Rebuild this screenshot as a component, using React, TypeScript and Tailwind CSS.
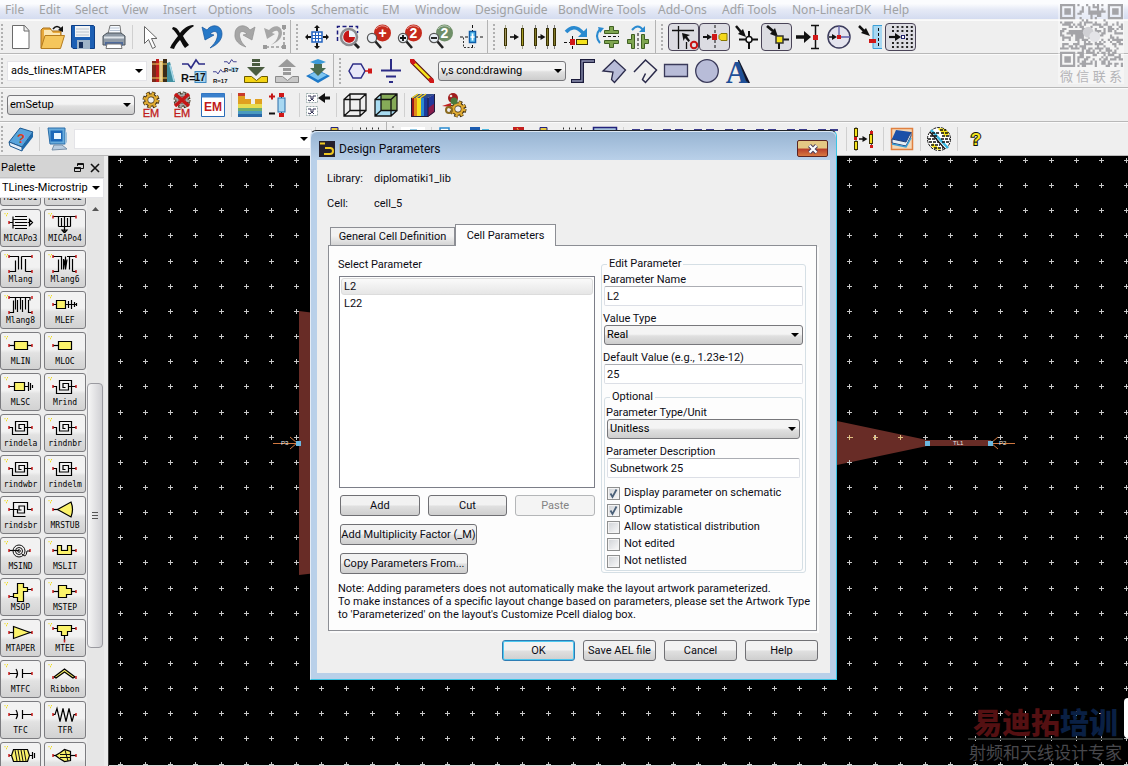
import React from 'react';
import clsx from 'clsx';

// ---------------------------------------------------------------- toolbar icons (24 x 24)

const arrowHead = 'M0 0l-5-3v6z';

const Gear: React.FC<{ fill: string }> = ({ fill }) => (
    <g>
        <circle cx="12" cy="7" r="6.5" fill="none" stroke="#3b2a10" strokeWidth="4" strokeDasharray="3.2 1.9" />
        <circle cx="12" cy="7" r="4.8" fill="none" stroke="#3b2a10" strokeWidth="4" />
        <circle cx="12" cy="7" r="6.5" fill="none" stroke={fill} strokeWidth="2.6" strokeDasharray="2.4 2.7" />
        <circle cx="12" cy="7" r="4.6" fill="none" stroke={fill} strokeWidth="2.4" />
    </g>
);

const EmText: React.FC<{ y: number; size?: number }> = ({ y, size = 11 }) => (
    <text x="12" y={y} fontSize={size} textAnchor="middle" fill="#c01a1a" stroke="#c01a1a" strokeWidth=".3" fontFamily="Liberation Sans, sans-serif">EM</text>
);

const Resistor: React.FC<{ x: number; y: number; s?: number }> = ({ x, y, s = 1 }) => (
    <path transform={`translate(${x} ${y}) scale(${s})`} d="M0 5h6l3 4 5-8 3 4h6" fill="none" stroke="#2c2c86" strokeWidth="1.6" />
);

const Lens: React.FC<{ bg: string; label: string; mark: string }> = ({ bg, label, mark }) => (
    <g>
        <circle cx="15.500" cy="8" r="8.500" fill={bg} />
        <path d="M9 4a8 8 0 0 1 12-1" stroke="#fff" strokeOpacity=".5" fill="none" />
        <text x="15.500" y="13" fontSize="14" fontWeight="bold" textAnchor="middle" fill="#fff" fontFamily="Liberation Sans, sans-serif">{label}</text>
        <path d="M8 16l6 7" stroke="#222" strokeWidth="2.6" />
        <circle cx="5" cy="13" r="4.6" fill="#e8eef4" stroke="#555" strokeWidth="1.2" />
        <path d={mark} stroke="#111" strokeWidth="1.8" fill="none" />
    </g>
);

const bar = (x: number, y: number, w: number, h: number, fill = '#f4e21c') => (
    <rect x={x} y={y} width={w} height={h} fill={fill} stroke="#3a3200" strokeWidth="1" />
);

const ICONS: Record<string, React.ReactNode> = {
    new: <path d="M3.500 .5h12l4.500 5v18H3.500zM15 .5v5.500h5" fill="#fff" stroke="#6a6a6a" />,
    open: (
        <g>
            <path d="M1 23V5l2-2h7l2 3h9v6" fill="#e8a93c" stroke="#a8701c" />
            <path d="M4 5h7l2 3h7v5H4z" fill="#fbe6b4" />
            <path d="M1 23.500L5 10.500h19.500l-4 13z" fill="#f5c65c" stroke="#b57c1e" />
            <path d="M13 4q4-5 8 0" fill="none" stroke="#111" strokeWidth="1.6" />
            <path d="M23 1v6l-5-2z" fill="#111" />
        </g>
    ),
    save: (
        <g>
            <path d="M.5 .5h22l1 1v22H2l-1.500-1.500z" fill="#1c5fb4" stroke="#0e3f86" />
            <rect x="4" y="1" width="15" height="11" fill="#f2f4f6" />
            <path d="M5 4h13M5 7h13M5 10h13" stroke="#bcc4cc" />
            <rect x="6" y="15" width="13" height="9" fill="#9fb4c8" />
            <rect x="8" y="17" width="4" height="6" fill="#17305c" />
        </g>
    ),
    print: (
        <g>
            <path d="M6 9L8 .5h10l1 8.500" fill="#f8fbff" stroke="#777" />
            <path d="M8 3h9M8 5.500h10" stroke="#b8c4d4" />
            <path d="M1 11l4-3h14l4 3v9H1z" fill="#8f9aa6" stroke="#4c545c" />
            <path d="M2 12.500h20" stroke="#dfe5ea" strokeWidth="2" />
            <path d="M3 17h18v3.500H3z" fill="#4f6a9a" />
            <path d="M5 19h14l1 4.500H4z" fill="#fff" stroke="#777" />
        </g>
    ),
    pointer: <path d="M5.500 1.500v17l4-4 4 9 3-1.500-4-8.500h5.500z" fill="#fff" stroke="#666" />,
    delete: <path d="M3 2c3 0 5 2 7 6 3-4 8-8 13-8l1 1c-5 3-8 6-11 10 2 4 4 6 6 9l-4 3c-2-2-3-5-5-8-3 3-5 6-6 9L0 23c2-5 5-8 8-12C6 8 4 5 2 4z" fill="#0c0c0c" />,
    undo: <path d="M1 2l3 13 9-5-4-1c5-5 9-2 7 4-1 4-4 7-7 10 7-3 12-8 12-14C21 0 11-2 6 5z" fill="#2779c8" stroke="#12539c" strokeWidth=".7" />,
    redo: <path d="M23 2l-3 13-9-5 4-1c-5-5-9-2-7 4 1 4 3 6 6 9C7 20 2 15 3 9 3 0 13-2 18 5z" fill="#a6a6a6" stroke="#8f8f8f" strokeWidth=".7" />,
    undoTo: (
        <g>
            <path d="M1 3l3 11 8-5-3-1c4-4 8-2 6 3-1 4-3 6-7 9 7-3 11-7 11-12C19 0 11-1 6 5z" fill="#a6a6a6" />
            <path d="M21 2v20H2" stroke="#9a9a9a" strokeWidth="1.6" fill="none" strokeDasharray="3 2" />
            <path d="M19 0h4v4h-4zM19 20h4v4h-4zM0 20h4v4H0z" fill="#9a9a9a" />
        </g>
    ),
    viewAll: (
        <g>
            <path d="M7 7h10v10H7z" fill="#fff" stroke="#2061c0" strokeWidth="1.500" />
            <path d="M10.500 7v10M13.500 7v10M7 10.500h10M7 13.500h10" stroke="#2061c0" />
            <path d="M12 0l-3 3h2v3h2V3h2zM12 24l-3-3h2v-3h2v3h2zM0 12l3-3v2h3v2H3v2zM24 12l-3-3v2h-3v2h3v2z" fill="#111" />
        </g>
    ),
    zoomArea: (
        <g>
            <path d="M1.500 16V1.500h20V8" fill="none" stroke="#1a1a7c" strokeWidth="1.500" strokeDasharray="4 2.500" />
            <path d="M18 18l5 5" stroke="#222" strokeWidth="3" />
            <circle cx="13" cy="12" r="8" fill="#eef3f8" stroke="#8c8c90" strokeWidth="2.500" />
            <path d="M13 5.500V12h6a6 6 0 0 1-11 3A6.500 6.500 0 0 1 13 5.500z" fill="#c41616" />
        </g>
    ),
    zoomPlus: <Lens bg="#c62a1c" label="+" mark="" />,
    zoomIn: <Lens bg="#c62a1c" label="2" mark="M2 13h6M5 10v6" />,
    zoomOut: <Lens bg="#6f8f68" label="2" mark="M2 13h6" />,
    center: (
        <g>
            <path d="M0 12h24M12.500 0v24" stroke="#111" strokeDasharray="3 2" />
            <path d="M3.500 12.500v10H15" fill="none" stroke="#333" strokeDasharray="2 1.500" />
            <rect x="9.500" y="6.500" width="6" height="11" fill="#5cc0f0" stroke="#0f5da8" strokeWidth="1.500" />
            <path d="M12.500 8.500v7M10.500 12h4" stroke="#fff" strokeWidth="1.500" />
        </g>
    ),
    move: (
        <g>
            {bar(2.5, 3.5, 2, 17, '#f0d79a')}
            {bar(19.5, 3.5, 2, 17)}
            <path d="M3.500 0v24M20.500 0v24" stroke="#55552a" strokeOpacity=".5" />
            <path d="M8 12h6" stroke="#111" strokeWidth="1.600" />
            <path transform="translate(17 12)" d={arrowHead} fill="#111" />
        </g>
    ),
    copy: (
        <g>
            {bar(1.500, 3.500, 2, 17)}
            {bar(13.500, 3.500, 2, 17)}
            {bar(20.500, 3.500, 2, 17)}
            <path d="M2.500 0v24M14.500 0v24M21.500 0v24" stroke="#333" strokeOpacity=".6" />
            <path d="M5 12h4" stroke="#111" strokeWidth="1.600" />
            <path transform="translate(12.500 12)" d={arrowHead} fill="#111" />
        </g>
    ),
    rotate: (
        <g>
            <path d="M2 7q8-9 17 1" fill="none" stroke="#2a8ad0" strokeWidth="3.500" />
            <path d="M23 3v9h-9z" fill="#2a8ad0" />
            <path d="M8.500 11v13M0 17.500h7" stroke="#111" strokeDasharray="3 2" />
            <rect x="6" y="14" width="5" height="6" fill="#d01818" />
            {bar(12.500, 14.500, 11, 5)}
        </g>
    ),
    mirrorY: (
        <g>
            <path d="M5 4q-6 7 0 14" fill="none" stroke="#2a8ad0" strokeWidth="2" />
            <path d="M3 2l6 1-4 5z" fill="#2a8ad0" />
            <path d="M8 11.500h16" stroke="#111" strokeDasharray="3 2" />
            <path d="M9.500 5.500h5v-4h4v4h5v3h-14zM9.500 15.500h14v3h-5v4h-4v-4h-5z" fill="#7fa650" stroke="#3f5f22" />
        </g>
    ),
    mirrorX: (
        <g>
            <path d="M6 5q6-7 11 0" fill="none" stroke="#2a8ad0" strokeWidth="2" />
            <path d="M19 1v6h-6z" fill="#2a8ad0" />
            <path d="M12 8v16" stroke="#111" strokeDasharray="3 2" />
            <path d="M5.500 9.500h3v14h-3v-5h-4v-4h4zM15.500 9.500h3v5h4v4h-4v5h-3z" fill="#7fa650" stroke="#3f5f22" />
        </g>
    ),
    snapOrtho: (
        <g>
            <path d="M6.500 1v23M0 5.500h22" stroke="#111" strokeWidth="1.300" />
            <path d="M10 8l8 2-3 1.500 3 4-1.500 1.500-3.500-4-1.500 3z" fill="#111" />
            <path d="M14.500 17v7" stroke="#111" strokeWidth="1.300" />
            <circle cx="22" cy="20" r="3.200" fill="none" stroke="#c81414" strokeWidth="2" />
        </g>
    ),
    snapPin: (
        <g>
            <path d="M12 0v24" stroke="#111" strokeDasharray="3 2" />
            <path d="M0 12h6" stroke="#111" strokeWidth="2" />
            <path transform="translate(9 12)" d={arrowHead} fill="#111" />
            <rect x="9" y="9" width="5" height="6" fill="#d01818" />
            <path d="M24 8.500h-6l-2 2v3l2 2h6z" fill="#f4d81c" stroke="#8a7a00" />
        </g>
    ),
    snapVertex: (
        <g>
            <path d="M15 6v18M5 14.500h19" stroke="#111" strokeWidth="2" />
            <path d="M2 1l5 6" stroke="#111" strokeWidth="2.500" />
            <path d="M12 12L4 9l5-5z" fill="#111" />
            <circle cx="15" cy="14.500" r="3" fill="#fff" stroke="#111" strokeWidth="1.500" />
        </g>
    ),
    snapMid: (
        <g>
            <path d="M14 15v9M12 14.500h12" stroke="#111" strokeWidth="2" />
            <path d="M2 1l6 5" stroke="#111" strokeWidth="2.800" />
            <path d="M13 12L5 9l5-6z" fill="#111" />
            <rect x="11" y="11" width="7" height="7" fill="#f4e21c" stroke="#333" strokeWidth="1.500" />
        </g>
    ),
    snapEdge: (
        <g>
            <path d="M0 12h9" stroke="#111" strokeWidth="3.500" />
            <path d="M15 12L8 6v12z" fill="#111" />
            <path d="M15 .5h8M15 23.500h8M19.500 0v24" stroke="#111" strokeWidth="1.500" />
            <rect x="17" y="10" width="5" height="5" fill="#d01818" />
        </g>
    ),
    snapCenter: (
        <g>
            <circle cx="12" cy="12" r="11" fill="#e4e4ee" stroke="#3c3c5c" strokeWidth="1.500" />
            <path d="M12 1v11h11" stroke="#5c5ca8" strokeWidth="1.300" fill="none" />
            <path d="M2 12h5" stroke="#111" strokeWidth="1.500" />
            <path transform="translate(10 12)" d={arrowHead} fill="#111" />
            <rect x="10" y="10" width="4" height="4" fill="#d01818" />
        </g>
    ),
    snapBox: (
        <g>
            <path d="M24 .5h-9v23h9" fill="#a9d8f2" stroke="#3aa0d8" />
            <path d="M20.500 3v18" stroke="#111" strokeDasharray="3 2" />
            <path d="M1 1l5 5" stroke="#111" strokeWidth="2.500" />
            <path d="M12 11L3 8l5-5z" fill="#111" />
            <rect x="11" y="14" width="7" height="4" fill="#d01818" />
        </g>
    ),
    snapGrid: (
        <g>
            <path d="M3 2h21M3 6h21M3 18h21M3 22h21M17 10h7M17 14h7" stroke="#222" strokeWidth="2" strokeDasharray="2 2.700" />
            <path d="M0 12h6" stroke="#111" strokeWidth="2.200" />
            <path d="M12 12L6 8v8z" fill="#111" />
            <rect x="12.500" y="10.500" width="3" height="3" fill="#fff" stroke="#22226c" />
        </g>
    ),
    library: (
        <g>
            <path d="M1 2h4v21H1z" fill="#7a2a1a" />
            <path d="M5 0h3v23H5z" fill="#c01c1c" />
            <path d="M8 2h4v21H8z" fill="#d8b060" />
            <path d="M12 0h4v23h-4z" fill="#3c2c18" />
            <path d="M16 4l3-1 5 20h-8z" fill="#3f8fa0" />
            <path d="M19 6l4 16" stroke="#a8d8e8" strokeWidth="1.500" />
            <path d="M1 5h15M1 19h15" stroke="#f0d060" />
            <path d="M10 3v19" stroke="#f4ecc8" />
        </g>
    ),
    edit17: (
        <g>
            <Resistor x={0} y={0} />
            <rect x="13" y="12.500" width="11" height="11" fill="#a8d4ee" stroke="#3a86c0" />
            <text x="-1" y="23" fontSize="11" fontWeight="bold" fill="#111" fontFamily="Liberation Sans, sans-serif">R=</text>
            <text x="12.500" y="22" fontSize="10" fontWeight="bold" fill="#111" fontFamily="Liberation Sans, sans-serif">17</text>
        </g>
    ),
    edit17b: (
        <g>
            <Resistor x={11} y={0} s={0.55} />
            <Resistor x={0} y={10} s={0.55} />
            <rect x="18" y="8" width="6" height="5" fill="#a8d4ee" />
            <text x="11" y="13" fontSize="6" fontWeight="bold" fill="#111" fontFamily="Liberation Sans, sans-serif">R=17</text>
            <text x="0" y="24" fontSize="6" fontWeight="bold" fill="#111" fontFamily="Liberation Sans, sans-serif">R=17</text>
        </g>
    ),
    pushDown: (
        <g>
            <path d="M.5 17.500h7l5 4 5-4h6v6H.5z" fill="#f4d414" stroke="#6a5a00" />
            <path d="M8 0h8v3H8zM8 4h8v3H8zM3 8h18l-9 9z" fill="#4a5c40" />
        </g>
    ),
    popUp: (
        <g>
            <path d="M.5 17.500h7l5 4 5-4h6v6H.5z" fill="#c8c8c8" stroke="#8a8a8a" />
            <path d="M12 0l9 8H3zM8 9h8v3H8zM8 13h8v3H8z" fill="#9a9a9a" />
        </g>
    ),
    stack: (
        <g>
            <path d="M0 17l12-6 12 6-12 7z" fill="#1c78c8" />
            <path d="M3 16l9-4 9 4-9 5z" fill="#7cc4f0" />
            <path d="M4 3l8-3 8 3-8 3z" fill="#3a9ad8" />
            <path d="M8 5h8v4h4l-8 8-8-8h4z" fill="#4a6c50" />
        </g>
    ),
    port: (
        <g>
            <path d="M1 12l4-7h8l4 7-4 7H5z" fill="#e8e8f8" stroke="#2c2c86" strokeWidth="1.500" />
            <path d="M17 12h4" stroke="#d01818" strokeWidth="1.500" />
            <rect x="20" y="9.500" width="4" height="5" fill="#d01818" />
        </g>
    ),
    ground: <path d="M12 0v11M2 11.500h20M7 17.500h10M10 23h4" stroke="#2c2c86" strokeWidth="2" />,
    wire: (
        <g>
            <path d="M2 2l20 20" stroke="#5a1010" strokeWidth="5" />
            <path d="M3 3l18 18" stroke="#f4e21c" strokeWidth="2.500" />
            <path d="M0 0h4l2 4-3 2-3-3zM24 24h-4l-2-4 3-2 3 3z" fill="#d01818" />
        </g>
    ),
    path: <g><path d="M0 22h11V2h13" fill="none" stroke="#1c1c3c" strokeWidth="4" /><path d="M1 22h10V2h12" fill="none" stroke="#9094b4" strokeWidth="1.300" /></g>,
    polygon: <path d="M12.500 1l11 10-11 12.500-3-3L11 13l-10-1z" fill="#b8bcd8" stroke="#2a2a4a" strokeWidth="1.300" />,
    polyline: <path d="M1 13L12.500 1l11 10-11 12.500-3-3 3-6" fill="none" stroke="#2a2a4a" strokeWidth="1.500" />,
    rect: <path d="M.5 5.500h23v12H.5z" fill="#b8bcd8" stroke="#3a3a5a" strokeWidth="1.300" />,
    circle: <circle cx="12" cy="12" r="11.300" fill="#b8bcd8" stroke="#3a3a5a" strokeWidth="1.300" />,
    text: (
        <g>
            <path d="M12 1h1l11 23h-9z" fill="#10102c" />
            <text x="11" y="23.500" fontSize="31" fontWeight="bold" textAnchor="middle" fill="#1f4f98" fontFamily="Liberation Serif, serif">A</text>
        </g>
    ),
    emSetup: <g><Gear fill="#e0ac34" /><EmText y={24} /></g>,
    emStop: <g><Gear fill="#a8a8a8" /><path d="M5 1l14 12M19 1L5 13" stroke="#c41616" strokeWidth="3.500" /><EmText y={24} /></g>,
    em: (
        <g>
            <path d="M.5 .5h23v23H.5z" fill="#fff" stroke="#2a6cb8" />
            <path d="M.5 .5h23v4H.5z" fill="#3a80cc" />
            <text x="12" y="18" fontSize="12" fontWeight="bold" textAnchor="middle" fill="#c01a1a" fontFamily="Liberation Sans, sans-serif">EM</text>
        </g>
    ),
    substrate: (
        <g>
            <path d="M0 0h7v3H0z" fill="#c83a2a" />
            <path d="M0 3h7v3h6v5h4V6h7v5H0z" fill="#e0a020" />
            <path d="M0 11h24v4H0z" fill="#e8dc50" />
            <path d="M0 15h24v3H0z" fill="#6fae70" />
            <path d="M0 18h24v3H0z" fill="#4a9ac0" />
            <path d="M0 21h24v3H0z" fill="#2a68a8" />
        </g>
    ),
    portEdit: (
        <g>
            <path d="M0 3.500h6M3 .5v6" stroke="#c41616" strokeWidth="2" />
            <path d="M0 20.500h6" stroke="#111" strokeWidth="2" />
            <path d="M12.500 1v22" stroke="#222" />
            <rect x="9" y="5" width="7" height="14" fill="#a8d8f2" stroke="#2a6ca8" />
            <path d="M10 0h5v4h-5zM10 20h5v4h-5z" fill="#d01818" />
        </g>
    ),
    cosim: (
        <g>
            <path d="M.5 .5h11v9H.5zM.5 13.500h11v9H.5z" fill="#fff" stroke="#9aa" strokeDasharray="2 1" />
            <path d="M2 3h3v3h2V3h3M2 7l2 1 2-2 2 2M2 16h3v3h2v-3h3M2 20l2 1 2-2 2 2" stroke="#335" fill="none" />
            <path d="M24 5h-6" stroke="#111" strokeWidth="3" />
            <path d="M12 5l7-5v10z" fill="#111" />
        </g>
    ),
    cube: <path d="M1 6.500h16v16.500H1zM7 1h16v16.500H7zM1 6.500L7 1M17 6.500L23 1M17 23l6-5.500M1 23l6-5.500" fill="none" stroke="#111" strokeWidth="1.300" />,
    cubeSolid: (
        <g>
            <path d="M7 1h16v16H7z" fill="#86ab58" />
            <path d="M1 6l6-5v17l-6 5z" fill="#a8dcf2" />
            <path d="M1 23l6-6h16l-6 6z" fill="#a8dcf2" />
            <path d="M1 6.500h16v16.500H1zM7 1h16v16.500H7zM1 6.500L7 1M17 6.500L23 1M17 23l6-5.500M1 23l6-5.500" fill="none" stroke="#111" strokeWidth="1.300" />
        </g>
    ),
    field: (
        <g>
            <path d="M0 5h4v19H0z" fill="#a01818" />
            <path d="M3 5h4v19H3z" fill="#e08a18" />
            <path d="M6 5h4v19H6z" fill="#f4e21c" />
            <path d="M10 5h3v19h-3z" fill="#2a8ad0" />
            <path d="M13 5h4v19h-4z" fill="#1c3c9c" />
            <path d="M17 5l7-4v18l-7 5z" fill="#8a1c4c" />
            <path d="M17 5l7-4v9l-7 5z" fill="#22389c" />
            <path d="M0 5l6-4h18l-7 4z" fill="#304c8c" />
            <path d="M1 5l6-4M5 5l6-4M9 5l6-4" stroke="#f0d020" strokeWidth="1.500" />
            <path d="M.5 5v18.500h16.500l6.500-5V1M17 5v18" fill="none" stroke="#1c1c3c" />
        </g>
    ),
    gearPerson: (
        <g>
            <g transform="translate(4 9)"><Gear fill="#e0ac34" /></g>
            <circle cx="11" cy="5" r="5" fill="#a01c1c" />
            <circle cx="12" cy="8" r="3.500" fill="#4c7a3c" />
            <circle cx="9" cy="3" r="1.300" fill="#e8e0d8" />
            <path d="M0 13l9-3v4z" fill="#c02020" />
            <circle cx="7" cy="17" r="3" fill="none" stroke="#8a6a20" strokeWidth="2" />
        </g>
    ),
    helpBook: (
        <g>
            <path d="M0 15L11 1l13 4-11 15z" fill="#58a4dc" stroke="#1c5890" />
            <path d="M0 15l13 5v4L1 19z" fill="#e4eef8" stroke="#1c5890" />
            <path d="M13 20L24 5v5L13 24z" fill="#1f68a8" />
            <text x="12" y="16" fontSize="13" fontWeight="bold" textAnchor="middle" fill="#d8401c" fontFamily="Liberation Sans, sans-serif">?</text>
        </g>
    ),
    monitor: (
        <g>
            <path d="M2 1h17v16H4z" fill="#68acdc" stroke="#2a6ca8" />
            <path d="M4.500 3.500h12v11h-12z" fill="#1c68b8" />
            <path d="M8 6h7v6H8z" fill="#eaf6ff" />
            <path d="M19 3l2 3v9l-2 3z" fill="#9cc0dc" />
            <path d="M8 18h8l5 4-15 1z" fill="#b8cce0" stroke="#7890a8" />
        </g>
    ),
    moveEdge: (
        <g>
            <path d="M3 0v24M18.500 3v17" stroke="#555" />
            {bar(1.500, 1.500, 3, 8)}
            {bar(1.500, 14.500, 3, 8)}
            {bar(16.500, 7.500, 3, 9)}
            <path d="M1 10h3v3H1zM17 4h3v3h-3zM17 18h3v3h-3z" fill="#d01818" />
            <path d="M6 12h5" stroke="#111" strokeWidth="1.500" />
            <path transform="translate(14.500 12)" d={arrowHead} fill="#111" />
        </g>
    ),
    designKit: (
        <g>
            <path d="M1.500 1.500h21v21h-21z" fill="#f4d8b8" stroke="#e08040" strokeWidth="1.500" />
            <path d="M6 3l15 2-5 10L2 12z" fill="#1c50a8" />
            <path d="M2 12l14 3 5-10v4l-5 10L2 16z" fill="#e8eef4" stroke="#1c3c78" />
            <path d="M2 17l14 3 5-9" fill="none" stroke="#3aa0d8" strokeWidth="1.500" />
        </g>
    ),
    globe: (
        <g>
            <circle cx="12" cy="12" r="11.500" fill="#fff" stroke="#111" strokeDasharray="3 1" />
            <path d="M12 1q8 0 10 6l-3 3-8-8zM6 16l8 7q-6 0-10-4z" fill="#f4e21c" />
            <path d="M4 3l17 18" stroke="#38b8e0" strokeWidth="2.500" />
            <path d="M5 6h7M3 9h7M1 12h9M2 15h10M4 18h9M7 21h9M13 3h6M14 6h8M15 9h8M14 12h9M15 15h7" stroke="#111" strokeWidth="1.400" strokeDasharray="3 1" />
            <path d="M3 5l15 17" stroke="#111" strokeWidth="1.300" />
        </g>
    ),
    help: (
        <text x="12" y="18" fontSize="17" fontWeight="bold" textAnchor="middle" fill="#f4e21c" stroke="#111" strokeWidth="2" paintOrder="stroke" fontFamily="Liberation Sans, sans-serif">?</text>
    ),
    pin: <g><path d="M9 .5h7v8H9z" fill="#e8c840" stroke="#22227c" /><path d="M11 3h3v3h-3z" fill="#d01818" /></g>,
    dots: <path d="M1 1.500h24" stroke="#333" strokeWidth="2" strokeDasharray="1 5" />,
    sheet: <g><path d="M0 0h24v24H0z" fill="#fff" /><path d="M9 2h7v4H9z" fill="#90c8e4" /></g>,
    window: <path d="M2 1h9v9H2z" fill="#fff" stroke="#2a8ad0" strokeWidth="1.500" />,
    windows: <g><path d="M1 0h10v8H1z" fill="#1c5cb0" /><path d="M13 2h7v7h-7z" fill="#50b8e0" /></g>,
    redBlock: <g><path d="M13 0h11v9H13z" fill="#c42020" /><path d="M17 1l2 3" stroke="#f0c040" /></g>,
    box: <path d="M.5 .5h23v20H.5z" fill="#a8c4dc" stroke="#22227c" strokeWidth="1.500" />,
    dashes: <path d="M2 3h8M14 3h8" stroke="#3c3c8c" strokeWidth="2" />,
};

const Icon: React.FC<{ name: string }> = ({ name }) => (
    <svg viewBox="0 0 24 24" className="size-6 overflow-visible" aria-hidden="true">{ICONS[name]}</svg>
);

// ---------------------------------------------------------------- toolbar parts

const ToolButton: React.FC<{ name: string; pressed?: boolean }> = ({ name, pressed }) => (
    <button
        type="button"
        aria-label={name}
        className={clsx(
            'flex h-7 w-[31px] shrink-0 items-center justify-center rounded-sm border',
            pressed ? 'border-[#4a4458] bg-[#dcdce2]' : 'border-transparent',
        )}
    >
        <Icon name={name} />
    </button>
);

const Separator = () => <div className="mr-0.5 ml-[3px] h-6 w-px shrink-0 bg-[#d0d0d0]" />;
const Handle: React.FC<{ first?: boolean; wide?: boolean }> = ({ first, wide }) => (
    <div
        className={clsx(
            'flex h-[33px] shrink-0 items-center',
            first ? 'w-[5px] pl-px' : 'border-l border-[#b4b4b4] pl-[5px]',
            !first && (wide ? 'ml-0.5 w-[13px]' : 'w-[11px]'),
        )}
    >
        <div className="h-[26px] border-l-2 border-dotted border-[#b0b0b0]" />
    </div>
);

const Tools: React.FC<{ items: string }> = ({ items }) => (
    <>
        {items.split(' ').map((name, i) => {
            if (name === '|') return <Separator key={i} />;
            if (name === '||') return <Handle key={i} />;
            return <ToolButton key={i} name={name.replace('*', '')} pressed={name.endsWith('*')} />;
        })}
    </>
);

const Toolbar: React.FC<{ children: React.ReactNode }> = ({ children }) => (
    <div className="flex h-[34px] shrink-0 items-center border-b border-[#b8b8b8] bg-[#efefef] shadow-[inset_0_1px_0_#fafafa]">
        {children}
    </div>
);

interface ComboProps {
    label: string;
    value: string;
    className?: string;
    flat?: boolean;
    id?: string;
}

const Combo: React.FC<ComboProps> = ({ label, value, className, flat, id }) => (
    <div className={clsx('relative h-5 shrink-0', className)}>
        <select
            id={id}
            aria-label={id ? undefined : label}
            defaultValue={value}
            className={clsx(
                'block h-full w-full appearance-none pr-3.5 text-[11px] leading-[16px] text-black outline-none',
                flat
                    ? 'border border-[#e4e4e8] bg-white pl-[3px]'
                    : 'rounded-[3px] border border-[#77777b] bg-linear-to-b from-[#f4f4f4] from-45% via-[#e0e0e0] via-55% to-[#cdcdcd] pl-0.5',
            )}
        >
            <option>{value}</option>
        </select>
        <svg viewBox="0 0 8 4" className="pointer-events-none absolute top-2 right-1 h-1 w-2" aria-hidden="true">
            <path d="M0 0h8L4 4z" />
        </svg>
    </div>
);

// ---------------------------------------------------------------- palette

const Lead: React.FC<{ d: string; ends: [number, number][] }> = ({ d, ends }) => (
    <g>
        <path d={d} fill="none" stroke="#000" strokeWidth="1.200" />
        {ends.map(([x, y]) => <path key={`${x}-${y}`} d={`M${x} ${y - 1.5}v3`} stroke="#c81c1c" strokeWidth="1.500" />)}
    </g>
);

const both: [number, number][] = [[7, 9.5], [30, 9.5]];
const left: [number, number][] = [[7, 9.5]];
const corners: [number, number][] = [[7, 2.5], [30, 2.5], [7, 17.5], [30, 17.5]];
const yellow = { fill: '#fbf36a', stroke: '#000', strokeWidth: 1.2 };

const SYMBOLS: Record<string, React.ReactNode> = {
    comb: <Lead d="M7 9.500h4M11 3.500v12M13 3.500h12M11 6.500h14M13 9.500h12M11 12.500h14M13 15.500h12M25.500 9.500h2M27.500 6.500v6l3-3z" ends={left} />,
    combDown: <Lead d="M7 3.500h23M12.500 3.500v10M15.500 5v8.500M18.500 3.500v15M21.500 5v8.500M24.500 3.500v10M12.500 13.500h12M16 17l2.500 3 2.500-3z" ends={[[7, 4], [30, 4]]} />,
    lange: <Lead d="M7 2.500h9.500v13M7 17.500h6.500v-11M19.500 2.500v13M19.500 2.500H30M23.500 17.500H30M23.500 5v12.500" ends={corners} />,
    lange6: <Lead d="M7 2.500h8.500v13M7 17.500h5.500v-12M17.500 5v10.500l1.500-10M19.500 2.500v13l1.500-10M23.500 2.500v13M21 2.500h9M26.500 17.500H30M26.500 5v12.500" ends={corners} />,
    lange8: <Lead d="M7 2.500h21v3M7 17.500h4.500v-12M13.500 2.500v12M15.500 5v12M18.500 2.500v12M20.500 5v12M23.500 2.500v12M26.500 5v12.500H30" ends={corners} />,
    mlef: <g><Lead d="M7 9.500h4M20 9.500h11M22.500 6v7M25.500 5v9M28.500 7v5M30.500 8v3" ends={left} /><path d="M10.500 5.500h9v8h-9z" {...yellow} /></g>,
    mlin: <g><Lead d="M7 9.500h23" ends={both} /><path d="M12.500 5.500h13v8h-13z" {...yellow} /></g>,
    mloc: <g><Lead d="M7 9.500h6" ends={left} /><path d="M12.500 5.500h13v8h-13z" {...yellow} /></g>,
    mlsc: <g><Lead d="M7 9.500h19M26.500 5v9M28.500 6v7M30.500 8v3" ends={left} /><path d="M12.500 5.500h10v8h-10z" {...yellow} /></g>,
    spiral: <Lead d="M7 9.500h3.500v7h15V3.500H13.500v9.500h9V6.500H17v4h2.500M22 9.500h8" ends={both} />,
    spiralIn: <Lead d="M7 9.500h8.500v3.500h7v-7h-5.500v4h2.500M30 9.500h-4.500v-7h-14v14h12" ends={both} />,
    stub: <g><Lead d="M7 9.500h5" ends={left} /><path d="M11.500 9.500L25 2q3 7.500 0 15z" {...yellow} /></g>,
    coil: <g><Lead d="M7 9.500h10" ends={[[7, 9.5], [28, 9.5]]} /><circle cx="17" cy="10" r="6" fill="none" stroke="#111" /><circle cx="17" cy="10" r="3.500" fill="none" stroke="#111" /><circle cx="17" cy="10" r="1.300" fill="none" stroke="#111" /><path d="M20 13q4 5 5-3h3" fill="none" stroke="#111" /></g>,
    slit: <g><Lead d="M7 9.500h23" ends={both} /><path d="M11.500 4.500h4v5h6v-5h4v9h-14z" {...yellow} /></g>,
    sop: <g><Lead d="M7 14.500h4M25 7.500h5" ends={[[7, 14.500], [30, 7.500]]} /><path d="M15.500 1.500h6v4h4v4h-4v10h-6v-4h-4v-4h4z" {...yellow} /></g>,
    step: <g><Lead d="M7 9.500h23" ends={both} /><path d="M12.500 3.500h8v3h5v6h-5v3h-8z" {...yellow} /></g>,
    taper: <g><Lead d="M7 9.500h23" ends={both} /><path d="M11.500 3.500L28 9.500l-16.500 6z" {...yellow} /></g>,
    tee: <g><Lead d="M7 5.500h23M18.500 12v6" ends={[[7, 5.500], [30, 5.500], [18.500, 18]]} /><path d="M11.500 2.500h14v6h-4v4h-6v-4h-4z" {...yellow} /></g>,
    cap: <Lead d="M7 9.500h8M14 5q3 4.500 0 9M20.500 5v9M20 9.500h10" ends={both} />,
    ribbon: <g><path d="M8 13L18.500 5 29 13l-2 1-8.500-6L10 14z" {...yellow} /><Lead d="" ends={[[7, 13.5], [30, 13.5]]} /></g>,
    resistor: <Lead d="M7 9.500h2l2-6 3 13 3-13 3 13 3-13 3 13 2-7h2" ends={both} />,
    wireCoil: <g><Lead d="M7 9.500h23M30.500 6v7M32.500 7v5" ends={left} /><path d="M11.500 3.500h14l2 6-2 6h-14l-2-6z" {...yellow} /><path d="M13 4l2 11M16 4l2 11M19 4l2 11M22 4l2 11" stroke="#111" /></g>,
    wireVia: <g><Lead d="M7 9.500h23" ends={both} /><path d="M9.500 9.500l5-3 4-3 6 2v9l-6 1-5-3z" {...yellow} /><path d="M14 8.500h11M14 11.500h11M19 4l3 11" stroke="#111" /></g>,
};

const PALETTE: [string, string][] = [
    ['comb', 'MICAPo1'], ['combDown', 'MICAPo2'],
    ['comb', 'MICAPo3'], ['combDown', 'MICAPo4'],
    ['lange', 'Mlang'], ['lange6', 'Mlang6'],
    ['lange8', 'Mlang8'], ['mlef', 'MLEF'],
    ['mlin', 'MLIN'], ['mloc', 'MLOC'],
    ['mlsc', 'MLSC'], ['spiral', 'Mrind'],
    ['spiral', 'rindela'], ['spiral', 'rindnbr'],
    ['spiral', 'rindwbr'], ['spiral', 'rindelm'],
    ['spiralIn', 'rindsbr'], ['stub', 'MRSTUB'],
    ['coil', 'MSIND'], ['slit', 'MSLIT'],
    ['sop', 'MSOP'], ['step', 'MSTEP'],
    ['taper', 'MTAPER'], ['tee', 'MTEE'],
    ['cap', 'MTFC'], ['ribbon', 'Ribbon'],
    ['cap', 'TFC'], ['resistor', 'TFR'],
    ['wireCoil', ''], ['wireVia', ''],
];

const Palette = () => (
    <aside className="flex w-[109px] shrink-0 flex-col border-r border-[#3c3c3c] bg-[#ececec]">
        <div className="mr-1 flex h-[22px] shrink-0 items-center justify-between border-b border-[#c4c4c4] bg-[#d4d4d4] pt-0.5 pr-1 pl-px">
            <h2 className="text-[11px] leading-[14px]">Palette</h2>
            <div className="flex gap-1.5">
                <button type="button" aria-label="Float palette">
                    <svg viewBox="0 0 10 10" className="size-2.5" fill="none" stroke="#111">
                        <path d="M3.500 3V.5h6v5H7M3 1.500h7M.5 4.500h6v4h-6zM0 5.500h7" />
                    </svg>
                </button>
                <button type="button" aria-label="Close palette">
                    <svg viewBox="0 0 10 10" className="size-2.5" stroke="#111" strokeWidth="1.600">
                        <path d="M1 1l8 8M9 1L1 9" />
                    </svg>
                </button>
            </div>
        </div>
        <Combo label="Palette" value="TLines-Microstrip" flat className="mr-1 -ml-0.5" />
        <div className="flex min-h-0 flex-1">
            <div className="h-full w-[87px] overflow-hidden">
                <div className="-mt-[30px] grid grid-cols-[41px_42px] gap-[3px]">
                    {PALETTE.map(([symbol, name], i) => (
                        <button
                            key={i}
                            type="button"
                            aria-label={name || symbol}
                            className="flex h-[38px] flex-col items-center rounded-[3px] border border-[#7c7c80] bg-linear-to-b from-[#f2f2f2] from-45% via-[#e2e2e2] via-55% to-[#d2d2d2] pt-[3px]"
                        >
                            <svg viewBox="0 0 38 20" className="h-5 w-[38px] shrink-0" aria-hidden="true">
                                <path d="M2.500 .5h1M5 .5h1M4 2.500h1" stroke="#eedc20" strokeWidth="1.500" />
                                {SYMBOLS[symbol]}
                            </svg>
                            <span className="font-['DejaVu_Sans_Mono',monospace] text-[8px] leading-[11px]">{name}</span>
                        </button>
                    ))}
                </div>
            </div>
            <div className="flex w-[17px] flex-col bg-[#e6e6e6]">
                <svg viewBox="0 0 17 17" className="mt-px size-[17px]" aria-hidden="true"><path d="M5 12h7L8.500 8z" fill="#555" /></svg>
                <div className="mt-[167px] flex h-[265px] w-4 items-center justify-center rounded-sm border border-[#9a9aa0] bg-linear-to-r from-[#f6f6f6] to-[#d0d0d4]">
                    <div className="h-[7px] w-1.5 border-y border-[#555] py-[2px]"><div className="h-px bg-[#555]" /></div>
                </div>
            </div>
        </div>
    </aside>
);

// ---------------------------------------------------------------- layout canvas

const GRID_STEP = 25.15;
const crosses = Array.from({ length: 41 * 25 }, (_, i) => {
    const x = Math.round(11 + (i % 41) * GRID_STEP);
    const y = Math.round(4 + Math.floor(i / 41) * GRID_STEP);
    return `M${x - 2} ${y + 0.5}h5M${x + 0.5} ${y - 2}v5`;
}).join('');

const LayoutCanvas = () => (
    <main className="relative min-w-0 flex-1 overflow-hidden border-b border-[#d8d8d8] bg-black">
        <svg className="absolute inset-0 size-full" aria-label="Layout">
            <path d="M190 155l400 50v168l-400 46zM728 265l90 19v6l-90 19zM818 284h64v6h-64z" fill="#682c26" />
            <path d={crosses} stroke="#c8c8c8" />
            <path d="M739 281.500h5M740.500 279v5M764 281.500h5M765.500 279v5M789 281.500h5M791.500 279v5" stroke="#e0c080" />
            <path d="M164 287.500h25M181 281l7 6-7 6M906 287.500h-25M889 281l-7 6 7 6" fill="none" stroke="#d07840" />
            <path d="M187 285h5v5h-5zM816 285h5v5h-5zM879 285h5v5h-5z" fill="#6cb8e0" />
            <g fill="#e8e8e8" fontSize="6" fontFamily="Liberation Sans, sans-serif">
                <text x="844" y="289">TL1</text>
                <text x="172" y="289">P3</text>
                <text x="890" y="289">P2</text>
            </g>
        </svg>
        <div className="absolute top-[542px] -right-px h-10 w-[5px] rounded-l-sm bg-white" />
        <div className="absolute right-[5px] bottom-1 w-[155px] font-['Noto_Sans_CJK_SC',sans-serif]">
            <div className="flex justify-center pb-0.5 text-[29px] leading-[30px] font-black">
                <span className="text-[#541012]">易迪拓</span>
                <span className="text-[#0a2044]">培训</span>
            </div>
            <div className="border-t-2 border-[#2c302e] pt-[3px] text-center text-[17px] leading-[18px] text-[#48484c]">射频和天线设计专家</div>
        </div>
    </main>
);

// ---------------------------------------------------------------- contact code

const QR_SIZE = 29;
const inFinder = (x: number, y: number) =>
    (x < 8 && y < 8) || (x >= QR_SIZE - 8 && y < 8) || (x < 8 && y >= QR_SIZE - 8);
const qrPath = Array.from({ length: QR_SIZE * QR_SIZE }, (_, i) => {
    const x = i % QR_SIZE;
    const y = Math.floor(i / QR_SIZE);
    if (inFinder(x, y)) return '';
    const noise = Math.sin(x * 12.9898 + y * 78.233) * 43758.5453;
    return noise - Math.floor(noise) < 0.52 ? `M${x} ${y}h1v1h-1z` : '';
}).join('');
const finder = (x: number, y: number) => `M${x} ${y}h7v7h-7zM${x + 1} ${y + 1}v5h5v-5zM${x + 2} ${y + 2}h3v3h-3z`;

const ContactCode = () => (
    <div className="absolute top-1 right-1 w-[66px] bg-white/40 px-0.5 text-[#b4b4b8]">
        <svg viewBox="0 0 29 29" className="size-[63px]" fill="#a4a4a8" fillRule="evenodd" aria-label="QR code">
            <path d={qrPath} />
            <path d={finder(0, 0) + finder(22, 0) + finder(0, 22)} />
            <circle cx="13" cy="13" r="2.500" fill="#d0d0d4" />
            <circle cx="16" cy="15" r="2.500" fill="#e4e4e8" />
        </svg>
        <div className="flex justify-between font-['Noto_Sans_CJK_SC',sans-serif] text-[13px] leading-[17px]">
            {['微', '信', '联', '系'].map(c => <span key={c}>{c}</span>)}
        </div>
    </div>
);

// ---------------------------------------------------------------- dialog

const PushButton: React.FC<{ children: React.ReactNode; className?: string; primary?: boolean; disabled?: boolean }> = ({ children, className, primary, disabled }) => (
    <button
        type="button"
        disabled={disabled}
        className={clsx(
            'h-[21px] rounded-[3px] border text-center text-[11px] leading-[19px] whitespace-nowrap',
            disabled
                ? 'border-[#b4b6b8] bg-[#f4f4f4] text-[#838383]'
                : 'bg-linear-to-b from-[#f2f2f2] from-45% via-[#dfdfdf] via-55% to-[#cfcfcf]',
            !disabled && (primary ? 'border-[#2e7db4] shadow-[inset_0_0_0_1px_#4cc8f0]' : 'border-[#707074]'),
            className,
        )}
    >
        {children}
    </button>
);

const TextField: React.FC<{ id: string; label: string; value: string }> = ({ id, label, value }) => (
    <div>
        <label htmlFor={id} className="-ml-px block leading-[13px]">{label}</label>
        <input
            id={id}
            type="text"
            defaultValue={value}
            className="block h-5 w-full rounded-[2px] border border-[#dcdfe6] border-t-[#abadb3] bg-white px-0.5 text-[11px] leading-[16px] outline-none"
        />
    </div>
);

const SelectField: React.FC<{ id: string; label: string; value: string }> = ({ id, label, value }) => (
    <div>
        <label htmlFor={id} className="-ml-px block leading-[13px]">{label}</label>
        <Combo id={id} label={label} value={value} />
    </div>
);

const Checkbox: React.FC<{ label: string; checked?: boolean }> = ({ label, checked }) => (
    <label className="flex h-[17px] items-center gap-[4px]">
        <span className="relative size-[13px]">
            <input
                type="checkbox"
                defaultChecked={checked}
                className="peer block size-[13px] appearance-none border border-[#8e8f8f] bg-linear-to-br from-[#cfd2d6] to-[#fafafa] shadow-[inset_0_0_0_1px_#f4f4f4]"
            />
            <svg viewBox="0 0 13 13" className="pointer-events-none absolute inset-0 hidden size-[13px] peer-checked:block" aria-hidden="true">
                <path d="M3.500 6.500l2 3.500 4-7.500" fill="none" stroke="#4a6078" strokeWidth="1.800" />
            </svg>
        </span>
        {label}
    </label>
);

const Group: React.FC<{ title: string; className?: string; children: React.ReactNode }> = ({ title, className, children }) => (
    <fieldset className={clsx('min-w-0 rounded-[3px] border border-[#d5dfe5]', className)}>
        <legend className="ml-[3px] px-[2px] leading-[12px]">{title}</legend>
        {children}
    </fieldset>
);

const DesignParametersDialog = () => (
    <div
        role="dialog"
        aria-label="Design Parameters"
        className="absolute top-[130px] left-[310px] w-[527px] rounded-t-md border border-t-[#202428] border-r-[#38c4e4] border-b-[#38c4e4] border-l-[#e4ecf6] bg-[#b9d0e9] px-[6px] pb-[6px] text-[11px] text-[#0c0c14]"
    >
        <div className="-mx-[6px] flex h-[29px] items-center gap-1 rounded-t-md bg-linear-to-b from-[#97b4d2] to-[#b9d0e9] pr-2 pl-2 shadow-[inset_0_1px_0_#dce8f4]">
            <svg viewBox="0 0 16 16" className="mt-1.5 size-4" aria-hidden="true">
                <path d="M0 0h16v16H0z" fill="#24202c" />
                <path d="M1 2.500h5M6 7h6M5 13h6q3 0 3-3t-3-3" fill="none" stroke="#f0c820" strokeWidth="2" />
            </svg>
            <h1 className="mt-1.5 text-xs">Design Parameters</h1>
            <button
                type="button"
                aria-label="Close"
                className="mt-1.5 ml-auto flex h-[17px] w-[31px] items-center justify-center rounded-[2px] border border-[#5a2424] bg-linear-to-b from-[#e4c884] from-45% via-[#b8402c] via-55% to-[#d87840]"
            >
                <svg viewBox="0 0 12 10" className="h-2.5 w-3" aria-hidden="true">
                    <path d="M2.500 1.500l7 7M9.500 1.500l-7 7" stroke="#4a4060" strokeWidth="4.200" />
                    <path d="M2.500 1.500l7 7M9.500 1.500l-7 7" stroke="#fff" strokeWidth="2.200" />
                </svg>
            </button>
        </div>

        <div className="bg-[#efefef] pt-3 pr-3 pb-3 pl-[11px]">
            <dl className="-ml-px grid grid-cols-[47px_1fr] gap-y-[11px] leading-[14px]">
                <dt>Library:</dt>
                <dd>diplomatiki1_lib</dd>
                <dt>Cell:</dt>
                <dd>cell_5</dd>
            </dl>

            <div role="tablist" className="mt-[13px] flex items-end pl-0.5 text-center">
                <button type="button" role="tab" aria-selected="false" className="h-[18px] w-[125px] border border-b-0 border-[#8c8e94] bg-linear-to-b from-[#f2f2f2] from-45% to-[#d4d4d4] leading-[16px]">
                    General Cell Definition
                </button>
                <button type="button" role="tab" aria-selected="true" className="relative -mb-px h-[22px] w-[101px] border border-b-0 border-[#8c8e94] bg-[#fdfdfd] leading-[20px]">
                    Cell Parameters
                </button>
            </div>

            <div role="tabpanel" className="mr-px border border-[#8c8e94] bg-[#fdfdfd] pt-3 pr-[10px] pb-[9px] pl-[9px] shadow-[2px_2px_0_#fafafa]">
                <div className="flex gap-[6px]">
                    <div className="min-w-0 flex-1">
                        <h2 className="leading-[13px]">Select Parameter</h2>
                        <ul role="listbox" aria-label="Select Parameter" className="mt-[5px] ml-px h-[212px] border border-[#7c7e88] bg-white p-px leading-[15px]">
                            <li role="option" aria-selected="true" className="rounded-[3px] border border-[#dcdcdc] bg-linear-to-b from-[#fafafa] to-[#e6e6e6] px-0.5">L2</li>
                            <li role="option" aria-selected="false" className="border border-transparent px-0.5">L22</li>
                        </ul>
                        <div className="mt-[7px] flex flex-col items-start gap-2 pl-0.5">
                            <div className="flex w-full gap-2">
                                <PushButton className="flex-1">Add</PushButton>
                                <PushButton className="flex-1">Cut</PushButton>
                                <PushButton className="flex-1" disabled>Paste</PushButton>
                            </div>
                            <PushButton className="w-[137px]">Add Multiplicity Factor (_M)</PushButton>
                            <PushButton className="w-32">Copy Parameters From...</PushButton>
                        </div>
                    </div>

                    <Group title="Edit Parameter" className="w-[205px] self-start px-0.5 pb-px">
                        <div className="flex flex-col gap-[6px] pt-[3px]">
                            <TextField id="parameter-name" label="Parameter Name" value="L2" />
                            <SelectField id="value-type" label="Value Type" value="Real" />
                            <TextField id="default-value" label="Default Value (e.g., 1.23e-12)" value="25" />
                        </div>
                        <Group title="Optional" className="mt-[7px] px-0.5">
                            <div className="flex flex-col gap-[6px] pt-[3px]">
                                <SelectField id="parameter-type" label="Parameter Type/Unit" value="Unitless" />
                                <TextField id="parameter-description" label="Parameter Description" value="Subnetwork 25" />
                            </div>
                            <div className="mt-[7px]">
                                <Checkbox label="Display parameter on schematic" checked />
                                <Checkbox label="Optimizable" checked />
                                <Checkbox label="Allow statistical distribution" />
                                <Checkbox label="Not edited" />
                                <Checkbox label="Not netlisted" />
                            </div>
                        </Group>
                    </Group>
                </div>
                <p className="mt-2 leading-[13px] whitespace-nowrap">
                    Note: Adding parameters does not automatically make the layout artwork parameterized.<br />
                    To make instances of a specific layout change based on parameters, please set the Artwork Type<br />
                    to 'Parameterized' on the layout's Customize Pcell dialog box.
                </p>
            </div>

            <div className="mt-[9px] flex justify-end gap-2">
                <PushButton className="w-[73px]" primary>OK</PushButton>
                <PushButton className="w-[73px]">Save AEL file</PushButton>
                <PushButton className="w-[73px]">Cancel</PushButton>
                <PushButton className="w-[73px]">Help</PushButton>
            </div>
        </div>
    </div>
);

// ---------------------------------------------------------------- window

const MENUS = [
    { label: 'File', width: 'w-[34px]' },
    { label: 'Edit', width: 'w-9' },
    { label: 'Select', width: 'w-[47px]' },
    { label: 'View', width: 'w-[41px]' },
    { label: 'Insert', width: 'w-[45px]' },
    { label: 'Options', width: 'w-[58px]' },
    { label: 'Tools', width: 'w-[45px]' },
    { label: 'Schematic', width: 'w-[71px]' },
    { label: 'EM', width: 'w-[33px]' },
    { label: 'Window', width: 'w-[60px]' },
    { label: 'DesignGuide', width: 'w-[83px]' },
    { label: 'BondWire Tools', width: 'w-[100px]' },
    { label: 'Add-Ons', width: 'w-16' },
    { label: 'Adfi Tools', width: 'w-[70px]' },
    { label: 'Non-LinearDK', width: 'w-[91px]' },
    { label: 'Help', width: 'w-10' },
];

export default function App() {
    return (
        <div className="relative flex h-screen flex-col overflow-hidden bg-[#efefef] font-['Roboto','Liberation_Sans',sans-serif] text-[11px] text-black">
            <nav className="flex h-5 shrink-0 items-center border-b border-[#f6f6f6] bg-linear-to-b from-[#fbfcfe] from-20% via-[#e6eaf6] via-50% to-[#d4dcf0] pl-[5px] font-['Noto_Sans',sans-serif] text-xs text-[#a0a2a4]">
                {MENUS.map(m => (
                    <button key={m.label} type="button" className={clsx('shrink-0 text-left whitespace-nowrap', m.width)}>{m.label}</button>
                ))}
            </nav>

            <Toolbar>
                <Handle first />
                <Tools items="new open save print | pointer delete undo redo undoTo || viewAll zoomArea zoomPlus zoomIn zoomOut center || move copy rotate mirrorY mirrorX" />
                <Handle wide />
                <Tools items="snapOrtho* snapPin* snapVertex snapMid* snapEdge snapCenter snapBox snapGrid*" />
            </Toolbar>
            <Toolbar>
                <Handle first />
                <Combo label="Component" value="ads_tlines:MTAPER" flat className="ml-0.5 w-[140px]" />
                <Tools items="library edit17 edit17b pushDown popUp stack || port ground wire" />
                <Combo label="Layer" value="v,s cond:drawing" className="mx-px w-[128px]" />
                <Tools items="path polygon polyline rect circle text" />
            </Toolbar>
            <Toolbar>
                <Handle first />
                <Combo label="EM setup" value="emSetup" className="ml-0.5 w-[128px]" />
                <Tools items="emSetup emStop em | substrate portEdit | cosim | cube cubeSolid | field gearPerson" />
            </Toolbar>
            <Toolbar>
                <Handle first />
                <Tools items="helpBook | monitor" />
                <Combo label="Address" value="" flat className="ml-px w-[238px]" />
                <Tools items="| pin | dots || sheet | window windows redBlock pin dots box | dashes dashes dashes dashes dashes dashes dashes | moveEdge | designKit | globe | help" />
            </Toolbar>

            <div className="flex min-h-0 flex-1">
                <Palette />
                <LayoutCanvas />
            </div>

            <ContactCode />
            <DesignParametersDialog />
        </div>
    );
}
